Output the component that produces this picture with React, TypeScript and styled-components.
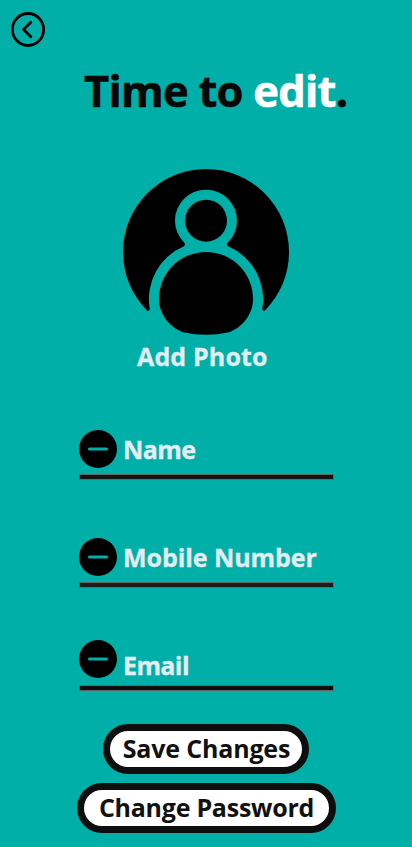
import React from "react";
import styled, { createGlobalStyle } from "styled-components";

const GlobalStyle = createGlobalStyle`
  *, *::before, *::after { box-sizing: border-box; }
  body {
    margin: 0;
    background: #00b0a8;
    font-family: "Open Sans", "Noto Sans", sans-serif;
    font-weight: 700;
  }
`;

const Screen = styled.main`
  width: 412px;
  height: 847px;
  overflow: hidden;
  display: flex;
  flex-direction: column;
  background: #00b0a8;
`;

const TopBar = styled.header`
  height: 61px;
  padding: 12px 0 0 11px;
`;

const BackButton = styled.button`
  display: block;
  width: 34px;
  height: 35px;
  padding: 0;
  border: 0;
  background: none;
`;

const Title = styled.h1`
  margin: 0 0 0 84px;
  height: 60px;
  line-height: 60px;
  font-size: 43.5px;
  letter-spacing: -0.75px;
  -webkit-text-stroke: 0.6px currentColor;
  white-space: nowrap;
  color: #080808;
`;

const Accent = styled.span`
  color: #fff;
`;

const Photo = styled.section`
  display: flex;
  flex-direction: column;
  align-items: flex-start;
  margin-top: 48px;
  height: 207px;

  svg {
    display: block;
    margin-left: 123px;
  }
`;

const Caption = styled.span<{ $track?: number }>`
  height: 36px;
  line-height: 36px;
  font-size: 25px;
  letter-spacing: ${(p) => p.$track ?? 0}px;
  -webkit-text-stroke: 0.3px currentColor;
  white-space: nowrap;
  color: #e3eef3;
`;

const PhotoCaption = styled(Caption)`
  margin: 3px 0 0 137px;
`;

const Fields = styled.form`
  display: flex;
  flex-direction: column;
  width: 255px;
  margin: 54px 0 0 79px;
`;

const Field = styled.div<{ $height: number; $rule: string; $gap: number }>`
  display: flex;
  align-items: flex-start;
  gap: 6px;
  height: ${(p) => p.$height}px;
  margin-bottom: ${(p) => p.$gap}px;
  background: linear-gradient(${(p) => p.$rule}, ${(p) => p.$rule}) 1px calc(100% - 1px) / 253px 4px no-repeat,
    linear-gradient(#626866, #626866) 0 100% / 255px 6px no-repeat;
`;

const FieldLabel = styled(Caption)<{ $drop: number }>`
  margin-top: ${(p) => p.$drop}px;
`;

const Actions = styled.footer`
  display: flex;
  flex-direction: column;
  align-items: center;
  gap: 9px;
  margin-top: 33px;
`;

const Action = styled.button<{ $width: number; $track: number }>`
  width: ${(p) => p.$width}px;
  height: 50px;
  padding: 0 0 1px 1px;
  border: 7px solid #0e0e0e;
  border-radius: 25px;
  background: #fff;
  color: #111;
  font: 700 25px/35px "Open Sans", "Noto Sans", sans-serif;
  letter-spacing: ${(p) => p.$track}px;
  white-space: nowrap;
`;

const BackIcon = () => (
  <svg width="34" height="35" viewBox="0 0 34 35" fill="none" stroke="#000">
    <ellipse cx="17" cy="17.5" rx="15.6" ry="16" strokeWidth="2.8" />
    <path d="M19.8 10.3 12.5 17.5l7.3 7.3" strokeWidth="2.8" strokeLinecap="round" strokeLinejoin="round" />
  </svg>
);

const Avatar = () => (
  <svg width="166" height="166" viewBox="0 0 166 166">
    <path d="M24 141.4A83 83 0 1 1 142 141.4Q139.5 143 139.3 139.6A57 57 0 0 0 105.5 77.6Q103 76.2 104.9 73.6A31 31 0 1 0 61.1 73.6Q63 76.2 60.5 77.6A57 57 0 0 0 26.7 139.6Q26.5 143 24 141.4Z" />
    <circle cx="83" cy="51.7" r="21" />
    <path d="M36 130A47 47 0 0 1 130 130C130 145.500 119 158.500 106 163.300Q83 168.300 60 163.300C47 158.500 36 145.500 36 130Z" />
  </svg>
);

const MinusIcon = () => (
  <svg width="38" height="38" viewBox="0 0 38 38">
    <circle cx="19" cy="19" r="19" />
    <path d="M10.500 19h17" stroke="#00b0a8" strokeWidth="3" strokeLinecap="round" />
  </svg>
);

const fields = [
  { label: "Name", height: 50, rule: "#141414", gap: 58, drop: 1, track: -0.6 },
  { label: "Mobile Number", height: 50, rule: "#1c1c1c", gap: 52, drop: 1, track: -0.06 },
  { label: "Email", height: 51, rule: "#0e0e0e", gap: 0, drop: 7, track: -0.6 },
];

export default function App() {
  return (
    <>
      <GlobalStyle />
      <Screen>
        <TopBar>
          <BackButton type="button" aria-label="Back">
            <BackIcon />
          </BackButton>
        </TopBar>
        <Title>
          Time to <Accent>edit</Accent>.
        </Title>
        <Photo>
          <Avatar />
          <PhotoCaption $track={0.15}>Add Photo</PhotoCaption>
        </Photo>
        <Fields>
          {fields.map((f) => (
            <Field key={f.label} $height={f.height} $rule={f.rule} $gap={f.gap}>
              <MinusIcon />
              <FieldLabel $drop={f.drop} $track={f.track}>
                {f.label}
              </FieldLabel>
            </Field>
          ))}
        </Fields>
        <Actions>
          <Action type="button" $width={206} $track={-0.18}>
            Save Changes
          </Action>
          <Action type="button" $width={259} $track={-0.25}>
            Change Password
          </Action>
        </Actions>
      </Screen>
    </>
  );
}
